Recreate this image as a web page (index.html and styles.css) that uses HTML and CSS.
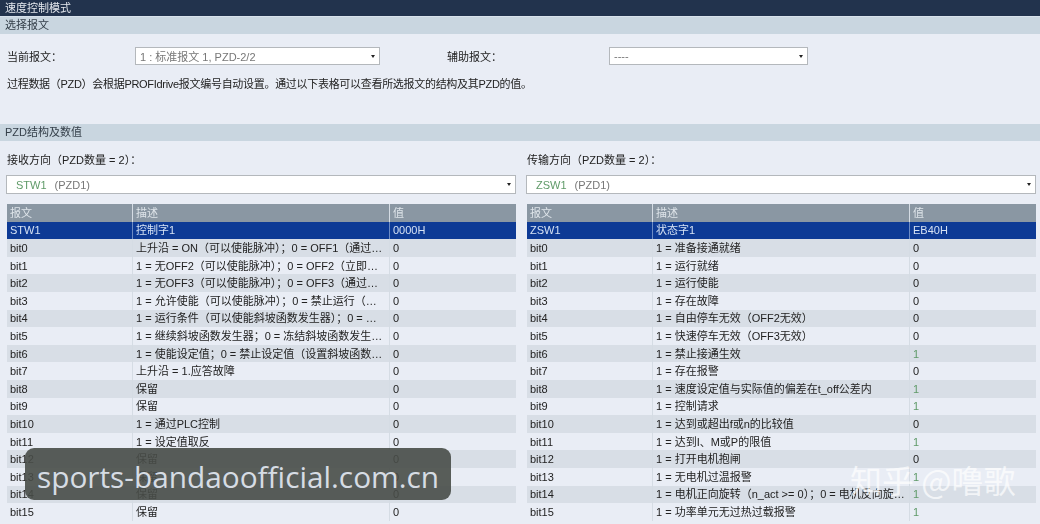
FILE: index.html
```html
<!DOCTYPE html>
<html>
<head>
    <title>速度控制模式</title>
    <link rel="stylesheet" href="styles.css">
</head>
<body>
    <div class="page">
        <div class="titlebar">速度控制模式</div>

        <div class="section-bar">选择报文</div>
        <div class="select-panel">
            <div class="select-row">
                <span class="select-label">当前报文：</span>
                <div class="dropdown dropdown-main"><span>1 : 标准报文 1, PZD-2/2</span><i class="arrow"></i></div>
                <span class="select-label aux-label">辅助报文：</span>
                <div class="dropdown dropdown-aux"><span>----</span><i class="arrow"></i></div>
            </div>
            <p class="note">过程数据（PZD）会根据PROFIdrive报文编号自动设置。通过以下表格可以查看所选报文的结构及其PZD的值。</p>
        </div>

        <div class="section-bar">PZD结构及数值</div>
        <div class="columns">
            <div class="column">
                <div class="dir-label">接收方向（PZD数量 = 2）：</div>
                <div class="dropdown dropdown-wide"><span><b>STW1</b><em>(PZD1)</em></span><i class="arrow"></i></div>
                <table class="pzd-table">
                    <tr class="head"><th>报文</th><th>描述</th><th>值</th></tr>
                    <tr class="selected"><td>STW1</td><td>控制字1</td><td>0000H</td></tr>
                    <tr><td>bit0</td><td>上升沿 = ON（可以使能脉冲）；0 = OFF1（通过斜坡函数停车）</td><td>0</td></tr>
                    <tr><td>bit1</td><td>1 = 无OFF2（可以使能脉冲）；0 = OFF2（立即封锁脉冲）</td><td>0</td></tr>
                    <tr><td>bit2</td><td>1 = 无OFF3（可以使能脉冲）；0 = OFF3（通过快速停车）</td><td>0</td></tr>
                    <tr><td>bit3</td><td>1 = 允许使能（可以使能脉冲）；0 = 禁止运行（封锁脉冲）</td><td>0</td></tr>
                    <tr><td>bit4</td><td>1 = 运行条件（可以使能斜坡函数发生器）；0 = 封锁</td><td>0</td></tr>
                    <tr><td>bit5</td><td>1 = 继续斜坡函数发生器；0 = 冻结斜坡函数发生器输出</td><td>0</td></tr>
                    <tr><td>bit6</td><td>1 = 使能设定值；0 = 禁止设定值（设置斜坡函数发生器输入）</td><td>0</td></tr>
                    <tr><td>bit7</td><td>上升沿 = 1.应答故障</td><td>0</td></tr>
                    <tr><td>bit8</td><td>保留</td><td>0</td></tr>
                    <tr><td>bit9</td><td>保留</td><td>0</td></tr>
                    <tr><td>bit10</td><td>1 = 通过PLC控制</td><td>0</td></tr>
                    <tr><td>bit11</td><td>1 = 设定值取反</td><td>0</td></tr>
                    <tr><td>bit12</td><td>保留</td><td>0</td></tr>
                    <tr><td>bit13</td><td>保留</td><td>0</td></tr>
                    <tr><td>bit14</td><td>保留</td><td>0</td></tr>
                    <tr><td>bit15</td><td>保留</td><td>0</td></tr>
                </table>
            </div>
            <div class="column">
                <div class="dir-label">传输方向（PZD数量 = 2）：</div>
                <div class="dropdown dropdown-wide"><span><b>ZSW1</b><em>(PZD1)</em></span><i class="arrow"></i></div>
                <table class="pzd-table">
                    <tr class="head"><th>报文</th><th>描述</th><th>值</th></tr>
                    <tr class="selected"><td>ZSW1</td><td>状态字1</td><td>EB40H</td></tr>
                    <tr><td>bit0</td><td>1 = 准备接通就绪</td><td>0</td></tr>
                    <tr><td>bit1</td><td>1 = 运行就绪</td><td>0</td></tr>
                    <tr><td>bit2</td><td>1 = 运行使能</td><td>0</td></tr>
                    <tr><td>bit3</td><td>1 = 存在故障</td><td>0</td></tr>
                    <tr><td>bit4</td><td>1 = 自由停车无效（OFF2无效）</td><td>0</td></tr>
                    <tr><td>bit5</td><td>1 = 快速停车无效（OFF3无效）</td><td>0</td></tr>
                    <tr><td>bit6</td><td>1 = 禁止接通生效</td><td class="on">1</td></tr>
                    <tr><td>bit7</td><td>1 = 存在报警</td><td>0</td></tr>
                    <tr><td>bit8</td><td>1 = 速度设定值与实际值的偏差在t_off公差内</td><td class="on">1</td></tr>
                    <tr><td>bit9</td><td>1 = 控制请求</td><td class="on">1</td></tr>
                    <tr><td>bit10</td><td>1 = 达到或超出f或n的比较值</td><td>0</td></tr>
                    <tr><td>bit11</td><td>1 = 达到I、M或P的限值</td><td class="on">1</td></tr>
                    <tr><td>bit12</td><td>1 = 打开电机抱闸</td><td>0</td></tr>
                    <tr><td>bit13</td><td>1 = 无电机过温报警</td><td class="on">1</td></tr>
                    <tr><td>bit14</td><td>1 = 电机正向旋转（n_act &gt;= 0）；0 = 电机反向旋转（n_act &lt; 0）</td><td class="on">1</td></tr>
                    <tr><td>bit15</td><td>1 = 功率单元无过热过载报警</td><td class="on">1</td></tr>
                </table>
            </div>
        </div>
    </div>

    <div class="site-mark">sports-bandaoofficial.com.cn</div>
    <div class="zhihu-mark">知乎 @噜歌</div>
</body>
</html>
```

FILE: styles.css
```css
html, body {
    margin: 0;
    padding: 0;
}
body {
    width: 1040px;
    height: 524px;
    overflow: hidden;
    position: relative;
    background: #e9edf5;
    font-family: "Liberation Sans", "Noto Sans CJK SC", sans-serif;
    font-size: 11px;
    color: #222;
}
.page {
    filter: blur(0.4px);
}
.titlebar {
    height: 16px;
    line-height: 16px;
    padding-left: 5px;
    background: #22334d;
    color: #e4e8ee;
    font-size: 11px;
    border-bottom: 1px solid #d8e2ec;
}
.section-bar {
    height: 17px;
    line-height: 17px;
    padding-left: 5px;
    background: #c9d6e0;
    color: #333e48;
    font-size: 11px;
}
.select-panel {
    height: 90px;
    padding: 13px 7px 0;
    box-sizing: border-box;
}
.select-row {
    display: flex;
    align-items: center;
    height: 18px;
}
.select-label {
    font-size: 11px;
}
.dropdown {
    display: flex;
    align-items: center;
    justify-content: space-between;
    box-sizing: border-box;
    height: 18px;
    padding: 0 4px;
    background: #fff;
    border: 1px solid #b4b8bc;
    color: #777;
    font-size: 11px;
}
.dropdown-main {
    width: 245px;
    margin-left: 73px;
}
.aux-label {
    margin-left: 67px;
}
.dropdown-aux {
    width: 199px;
    margin-left: 107px;
}
.arrow {
    width: 0;
    height: 0;
    border-left: 2.5px solid transparent;
    border-right: 2.5px solid transparent;
    border-top: 3px solid #222;
}
.note {
    margin: 11px 0 0;
    line-height: 16px;
    font-size: 11px;
    letter-spacing: -0.3px;
}
.columns {
    display: flex;
    gap: 10px;
    padding: 0 4px 0 6px;
}
.column {
    flex: 1;
    min-width: 0;
}
.dir-label {
    height: 34px;
    padding: 12px 1px 0;
    box-sizing: border-box;
    line-height: 14px;
    font-size: 11px;
}
.dropdown-wide {
    height: 19px;
    padding-left: 9px;
}
.dropdown-wide b {
    font-weight: normal;
    color: #5f9a68;
}
.dropdown-wide em {
    font-style: normal;
    margin-left: 8px;
}
.pzd-table {
    width: calc(100% - 1px);
    margin: 10px 0 0 1px;
    border-collapse: collapse;
    table-layout: fixed;
    font-size: 11px;
}
.pzd-table tr {
    height: 17.6px;
}
.pzd-table th, .pzd-table td {
    padding: 0 3px;
    white-space: nowrap;
    overflow: hidden;
    text-overflow: ellipsis;
    border-right: 1px solid #d5dce4;
    text-align: left;
    font-weight: normal;
    line-height: 16px;
}
.pzd-table th:first-child, .pzd-table td:first-child {
    width: 119px;
}
.pzd-table th:last-child, .pzd-table td:last-child {
    width: 120px;
    border-right: 0;
}
.pzd-table tr:nth-child(odd) td {
    background: #d8dee6;
}
.pzd-table tr:nth-child(even) td {
    background: #e9edf5;
}
.pzd-table tr.head th {
    background: #8a97a3;
    color: #dfe5ea;
}
.pzd-table tr.selected td {
    background: #0d3a95;
    color: #d6e2f4;
    border-right-color: #6d8cc4;
}
.pzd-table td.on {
    color: #5f9a68;
}
.site-mark {
    position: absolute;
    left: 25px;
    top: 448px;
    width: 426px;
    height: 52px;
    line-height: 58px;
    border-radius: 9px;
    background: rgba(72, 76, 72, 0.9);
    color: #d6dce4;
    font-family: "Open Sans", sans-serif;
    font-size: 29.8px;
    text-align: center;
    white-space: nowrap;
}
.zhihu-mark {
    position: absolute;
    left: 850px;
    top: 460px;
    color: rgba(255, 255, 255, 0.7);
    font-family: "Noto Sans CJK SC", sans-serif;
    font-size: 32px;
    line-height: 38px;
    white-space: nowrap;
}
```
